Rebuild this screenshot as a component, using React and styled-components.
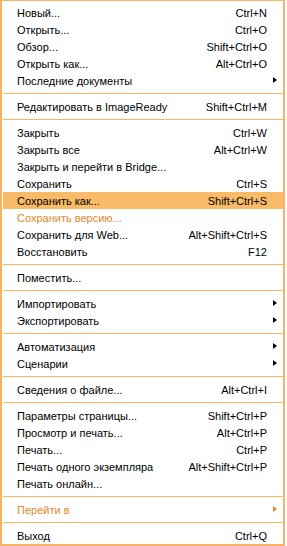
import React from 'react';
import styled, { createGlobalStyle } from 'styled-components';

const GlobalStyle = createGlobalStyle`
  html, body {
    margin: 0;
    padding: 0;
    background: #ffffff;
  }
`;

const groups = [
  [
    { label: 'Новый...', key: 'Ctrl+N' },
    { label: 'Открыть...', key: 'Ctrl+O' },
    { label: 'Обзор...', key: 'Shift+Ctrl+O' },
    { label: 'Открыть как...', key: 'Alt+Ctrl+O' },
    { label: 'Последние документы', sub: true },
  ],
  [{ label: 'Редактировать в ImageReady', key: 'Shift+Ctrl+M' }],
  [
    { label: 'Закрыть', key: 'Ctrl+W' },
    { label: 'Закрыть все', key: 'Alt+Ctrl+W' },
    { label: 'Закрыть и перейти в Bridge...' },
    { label: 'Сохранить', key: 'Ctrl+S' },
    { label: 'Сохранить как...', key: 'Shift+Ctrl+S', active: true },
    { label: 'Сохранить версию...', disabled: true },
    { label: 'Сохранить для Web...', key: 'Alt+Shift+Ctrl+S' },
    { label: 'Восстановить', key: 'F12' },
  ],
  [{ label: 'Поместить...' }],
  [
    { label: 'Импортировать', sub: true },
    { label: 'Экспортировать', sub: true },
  ],
  [
    { label: 'Автоматизация', sub: true },
    { label: 'Сценарии', sub: true },
  ],
  [{ label: 'Сведения о файле...', key: 'Alt+Ctrl+I' }],
  [
    { label: 'Параметры страницы...', key: 'Shift+Ctrl+P' },
    { label: 'Просмотр и печать...', key: 'Alt+Ctrl+P' },
    { label: 'Печать...', key: 'Ctrl+P' },
    { label: 'Печать одного экземпляра', key: 'Alt+Shift+Ctrl+P' },
    { label: 'Печать онлайн...' },
  ],
  [{ label: 'Перейти в', sub: true, disabled: true }],
  [{ label: 'Выход', key: 'Ctrl+Q' }],
];

const Menu = styled.div`
  width: 280px;
  border-top: 1px solid #f8b462;
  border-left: 2px solid #f8b462;
  border-right: 2px solid #f8b462;
  border-bottom: 2px solid #f8b462;
  padding: 3px 0 0 1px;
  font-family: 'Liberation Sans', Arial, sans-serif;
  font-size: 11px;
  color: #000000;
  background: #ffffff;
`;

const Row = styled.div`
  display: flex;
  align-items: center;
  height: 17px;
  padding: 0 16px 0 14px;
  background: ${p => (p.$active ? '#f9bb67' : 'transparent')};
  color: ${p => (p.$disabled ? '#e0892e' : '#000000')};
  position: relative;
`;

const Label = styled.span`
  flex: 1;
  white-space: nowrap;
`;

const Key = styled.span`
  white-space: nowrap;
`;

const Arrow = styled.span`
  position: absolute;
  right: 6px;
  top: 5px;
  width: 0;
  height: 0;
  border-top: 3.5px solid transparent;
  border-bottom: 3.5px solid transparent;
  border-left: 4px solid ${p => (p.$disabled ? '#e0892e' : '#000000')};
`;

const Separator = styled.div`
  height: 9px;
  display: flex;
  align-items: center;
  &::after {
    content: '';
    display: block;
    width: 100%;
    height: 1px;
    background: #f8b462;
  }
`;

export default function App() {
  return (
    <>
      <GlobalStyle />
      <Menu>
        {groups.map((group, gi) => (
          <React.Fragment key={gi}>
            {gi > 0 && <Separator />}
            {group.map(item => (
              <Row key={item.label} $active={item.active} $disabled={item.disabled}>
                <Label>{item.label}</Label>
                {item.key && <Key>{item.key}</Key>}
                {item.sub && <Arrow $disabled={item.disabled} />}
              </Row>
            ))}
          </React.Fragment>
        ))}
      </Menu>
    </>
  );
}
